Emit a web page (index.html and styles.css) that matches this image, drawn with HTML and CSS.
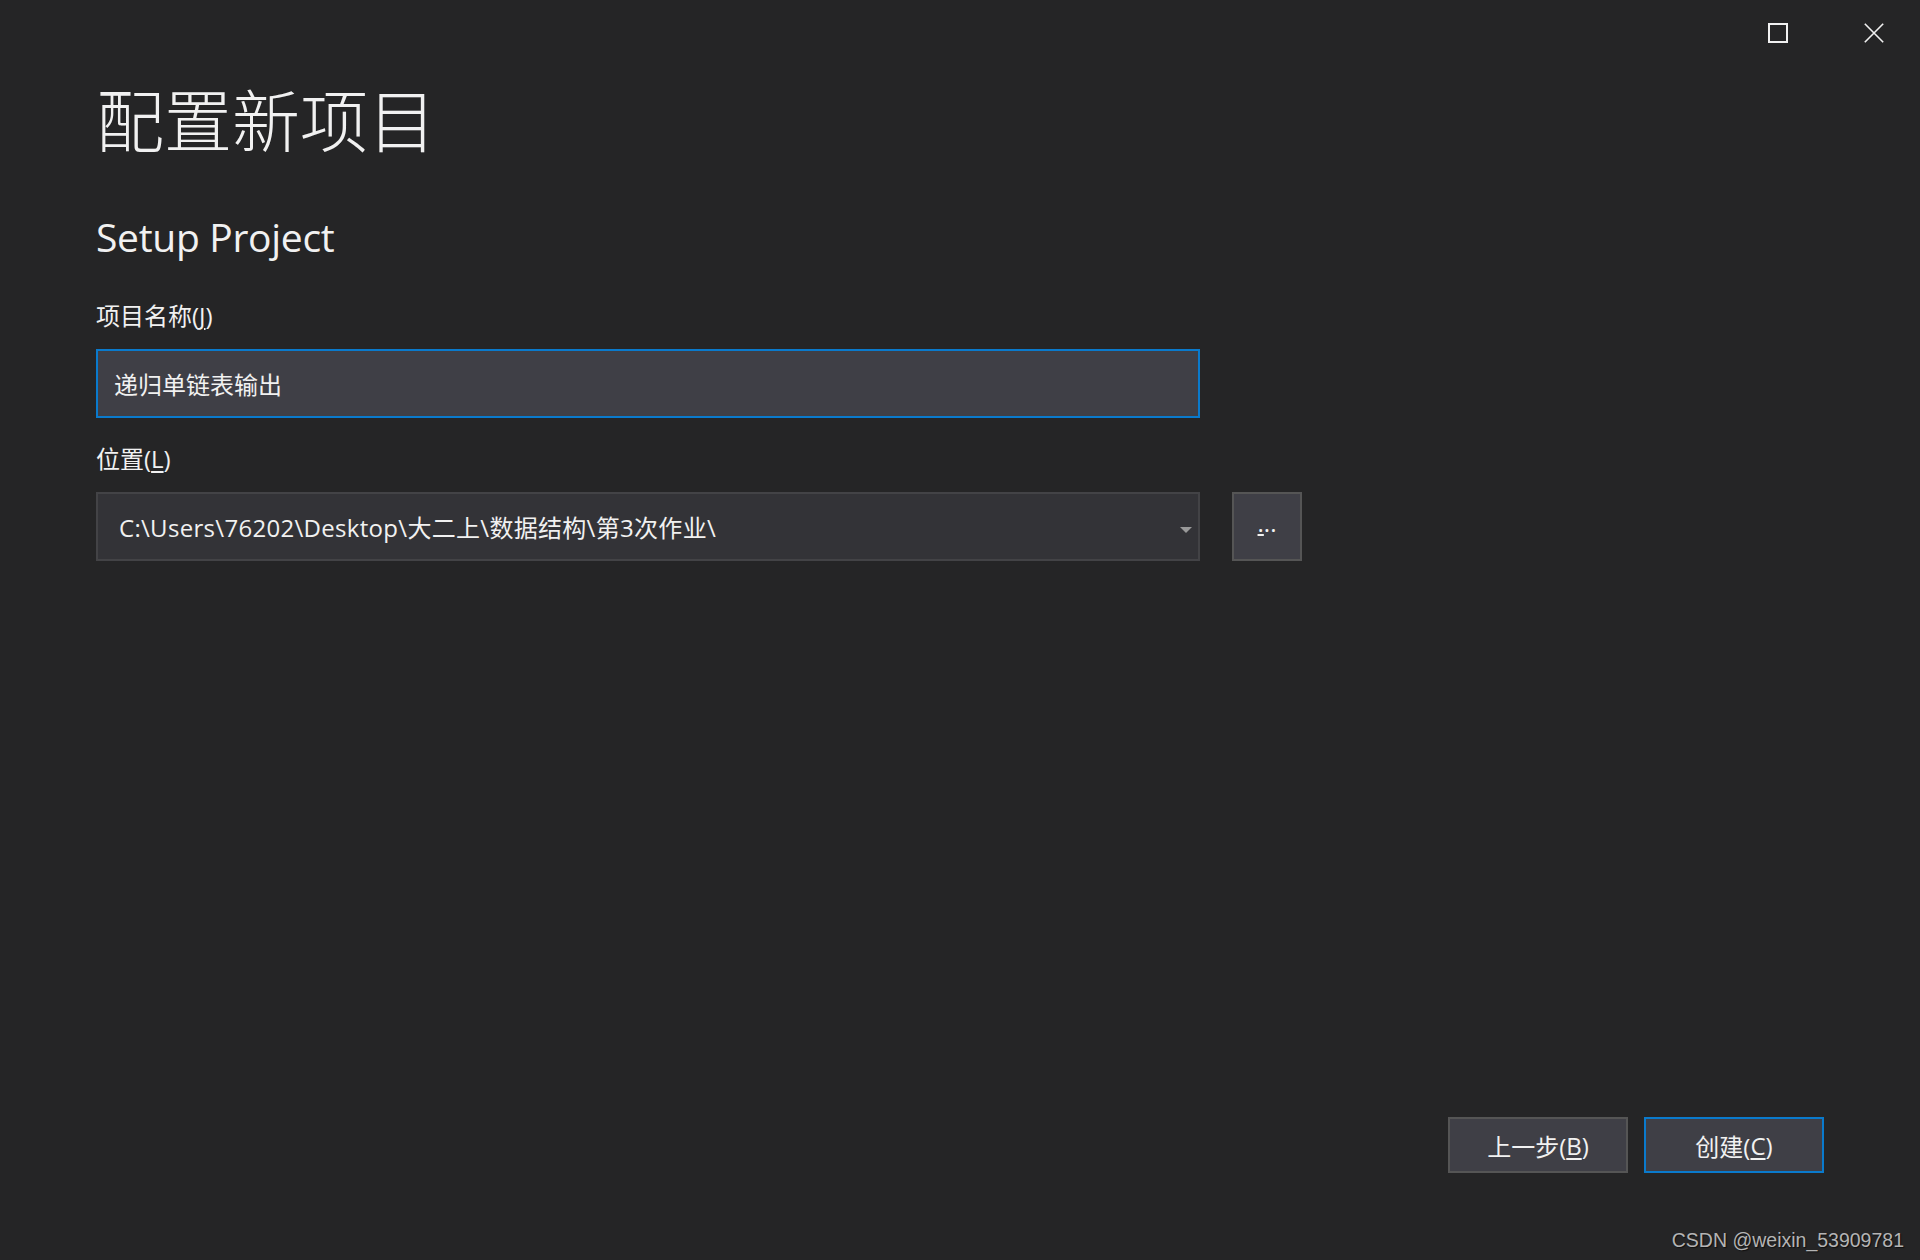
FILE: index.html
```html
<!DOCTYPE html>
<html lang="zh-CN">
<head>
<meta charset="utf-8">
<title>配置新项目</title>
<link rel="stylesheet" href="styles.css">
</head>
<body>
<div class="window">
  <div class="titlebar">
    <span class="tb-btn" aria-label="最大化">
      <svg width="20" height="20" viewBox="0 0 20 20"><rect x="1" y="1" width="18" height="18" fill="none" stroke="#f1f1f1" stroke-width="2"/></svg>
    </span>
    <span class="tb-btn" aria-label="关闭">
      <svg width="20" height="20" viewBox="0 0 20 20"><path d="M0.8 0.8 L19.2 19.2 M19.2 0.8 L0.8 19.2" fill="none" stroke="#f1f1f1" stroke-width="1.6"/></svg>
    </span>
  </div>

  <div class="content">
    <h1 class="title">配置新项目</h1>
    <h2 class="subtitle">Setup Project</h2>

    <div class="label label-first">项目名称(<u>J</u>)</div>
    <div class="textbox">递归单链表输出</div>

    <div class="label label-second">位置(<u>L</u>)</div>
    <div class="location-row">
      <div class="combo">
        <span class="combo-text">C:\Users\76202\Desktop\大二上\数据结构\第3次作业\</span>
        <svg class="combo-arrow" width="12" height="6" viewBox="0 0 12 6"><path d="M0 0 H12 L6 6 Z" fill="#999999"/></svg>
      </div>
      <div class="browse"><span class="dots"><u>.</u>..</span></div>
    </div>
  </div>

  <div class="footer">
    <div class="btn">上一步(<u>B</u>)</div>
    <div class="btn btn-primary">创建(<u>C</u>)</div>
  </div>

  <div class="watermark">CSDN @weixin_53909781</div>
</div>
</body>
</html>
```

FILE: styles.css
```css
html, body {
  margin: 0;
  padding: 0;
  background: #252526;
}

body {
  font-family: "Open Sans", "Noto Sans CJK SC", sans-serif;
  color: #f1f1f1;
}

.window {
  position: relative;
  height: 1260px;
  display: flex;
  flex-direction: column;
  box-sizing: border-box;
}

.titlebar {
  display: flex;
  justify-content: flex-end;
  gap: 76px;
  padding: 23px 36px 0 0;
  height: 20px;
}

.tb-btn {
  display: block;
  width: 20px;
  height: 20px;
}

.tb-btn svg {
  display: block;
}

.content {
  padding: 0 0 0 96px;
  display: flex;
  flex-direction: column;
}

.title {
  margin: 41px 0 0 0;
  font-family: "Noto Sans CJK SC", sans-serif;
  font-weight: 300;
  font-size: 68px;
  line-height: 68px;
  color: #f1f1f1;
}

.subtitle {
  margin: 65px 0 0 0;
  font-family: "Open Sans", "Noto Sans CJK SC", sans-serif;
  font-weight: 400;
  font-size: 39px;
  line-height: 40px;
  letter-spacing: -0.3px;
  color: #f1f1f1;
}

.label {
  font-family: "Open Sans", "Noto Sans CJK SC", sans-serif;
  font-size: 24px;
  line-height: 24px;
  margin-bottom: 21px;
  color: #f1f1f1;
}

.label-first {
  margin-top: 47px;
}

.label-second {
  margin-top: 29px;
}

u {
  text-decoration: underline;
  text-decoration-thickness: 2px;
  text-underline-offset: 3px;
}

.textbox {
  width: 1104px;
  height: 69px;
  box-sizing: border-box;
  border: 2px solid #0a7acc;
  background: #3f3f46;
  padding-left: 16px;
  display: flex;
  align-items: center;
  font-family: "Open Sans", "Noto Sans CJK SC", sans-serif;
  font-size: 24px;
  color: #f1f1f1;
}

.location-row {
  display: flex;
  gap: 32px;
  height: 69px;
}

.combo {
  width: 1104px;
  height: 69px;
  box-sizing: border-box;
  border: 2px solid #434346;
  background: #333337;
  padding: 0 6px 0 21px;
  display: flex;
  align-items: center;
  font-size: 24px;
  color: #f1f1f1;
}

.combo-text {
  flex: 1;
  white-space: nowrap;
  letter-spacing: 0.3px;
}

.combo-arrow {
  display: block;
  margin-top: 6px;
}

.browse {
  width: 70px;
  height: 69px;
  box-sizing: border-box;
  border: 2px solid #555555;
  background: #3f3f46;
  display: flex;
  align-items: center;
  justify-content: center;
  font-size: 24px;
  color: #f1f1f1;
}

.dots {
  line-height: 24px;
  margin-top: -8px;
}

.dots u {
  text-underline-offset: 2px;
}

.footer {
  margin-top: auto;
  display: flex;
  justify-content: flex-end;
  gap: 16px;
  padding: 0 96px 87px 0;
}

.btn {
  width: 180px;
  height: 56px;
  box-sizing: border-box;
  border: 2px solid #555555;
  background: #3f3f46;
  display: flex;
  align-items: center;
  justify-content: center;
  font-family: "Open Sans", "Noto Sans CJK SC", sans-serif;
  font-size: 24px;
  color: #f1f1f1;
}

.btn-primary {
  border-color: #0a7acc;
}

.watermark {
  position: absolute;
  right: 16px;
  bottom: 8px;
  font-family: "Liberation Sans", Arial, sans-serif;
  font-size: 19.5px;
  line-height: 24px;
  color: #b4b4b4;
  text-shadow: 1px 1px 1px rgba(0, 0, 0, 0.6);
}
```
